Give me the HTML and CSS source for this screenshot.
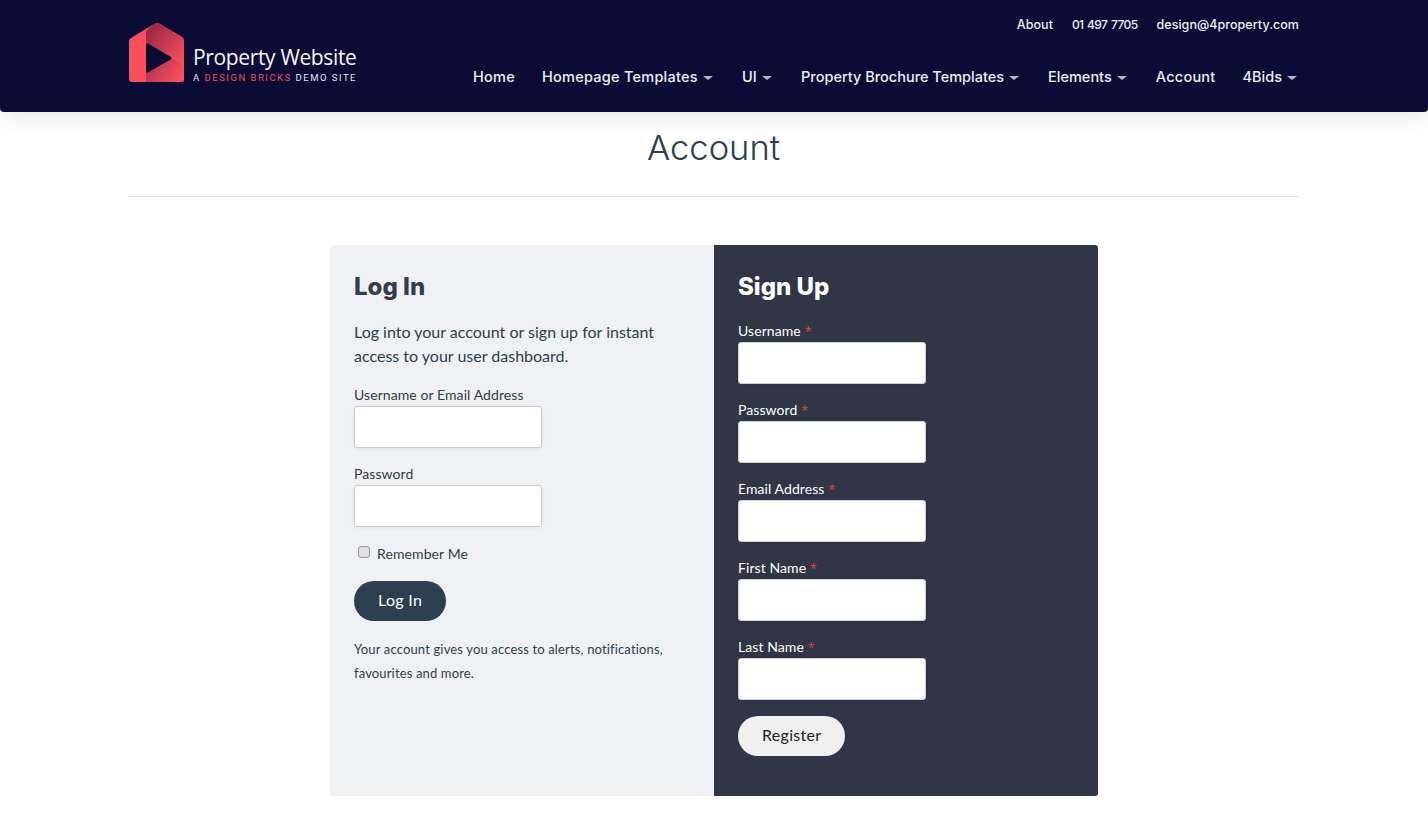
FILE: index.html
```html
<!DOCTYPE html>
<html lang="en">
<head>
    <meta charset="UTF-8">
    <meta name="viewport" content="width=device-width, initial-scale=1.0">
    <title>Account</title>
    <link rel="stylesheet" href="styles.css">
</head>
<body>
    <header class="site-header">
        <div class="header-inner">
            <a class="logo" href="#">
                <svg class="logo-mark" width="56" height="60" viewBox="0 0 56 60">
                    <defs>
                        <linearGradient id="logoFold" x1="0.1" y1="0.1" x2="0.9" y2="0.9">
                            <stop offset="0" stop-color="#9c2745"/>
                            <stop offset="1" stop-color="#fa505b"/>
                        </linearGradient>
                        <linearGradient id="logoBase" x1="0" y1="0.2" x2="1" y2="0.7">
                            <stop offset="0" stop-color="#b0304b"/>
                            <stop offset="1" stop-color="#fb4f5c"/>
                        </linearGradient>
                    </defs>
                    <path d="M2 15 L25 1 Q28 -0.5 31 1 L53 14 Q55 15.5 55 18 L55 56 Q55 59 52 59 L3 59 Q0 59 0 56 L0 18 Q0 16 2 15 Z" fill="#fb4f5c"/>
                    <path d="M17 8 L25 1 Q28 -0.5 31 1 L53 14 Q55 15.5 55 18 L55 47 Q52 38 42 33 L17 20 Z" fill="url(#logoFold)"/>
                    <path d="M17 49 L42.6 35 Q52 38 55 47 L55 56 Q55 59 52 59 L17 59 Z" fill="url(#logoBase)"/>
                    <path d="M17 22 Q17 19.5 19 20.5 L41.5 33.5 Q43.5 35 41.5 36.5 L19 49.5 Q17 50.5 17 48 Z" fill="#0a0c36"/>
                </svg>
                <span class="logo-text">
                    <span class="logo-name">Property Website</span>
                    <span class="logo-tag">A <em>DESIGN BRICKS</em> DEMO SITE</span>
                </span>
            </a>
            <div class="header-right">
                <nav class="top-links">
                    <a href="#">About</a>
                    <a href="#" class="phone">01 497 7705</a>
                    <a href="#">design@4property.com</a>
                </nav>
                <nav class="main-nav">
                    <a href="#">Home</a>
                    <a href="#" class="has-menu">Homepage Templates</a>
                    <a href="#" class="has-menu">UI</a>
                    <a href="#" class="has-menu tight">Property Brochure Templates</a>
                    <a href="#" class="has-menu tight">Elements</a>
                    <a href="#">Account</a>
                    <a href="#" class="has-menu tight">4Bids</a>
                </nav>
            </div>
        </div>
    </header>

    <main class="page">
        <h1 class="page-title">Account</h1>

        <div class="account-box">
            <section class="panel panel-login">
                <h2>Log In</h2>
                <p class="intro">Log into your account or sign up for instant access to your user dashboard.</p>
                <form>
                    <label class="field">Username or Email Address
                        <input type="text">
                    </label>
                    <label class="field">Password
                        <input type="password">
                    </label>
                    <label class="remember"><input type="checkbox"> Remember Me</label>
                    <button type="button" class="btn btn-dark">Log In</button>
                </form>
                <p class="note">Your account gives you access to alerts, notifications, favourites and more.</p>
            </section>

            <section class="panel panel-signup">
                <h2>Sign Up</h2>
                <form>
                    <label class="field">
                        <span>Username <i>*</i></span>
                        <input type="text">
                    </label>
                    <label class="field">
                        <span>Password <i>*</i></span>
                        <input type="password">
                    </label>
                    <label class="field">
                        <span>Email Address <i>*</i></span>
                        <input type="email">
                    </label>
                    <label class="field">
                        <span>First Name <i>*</i></span>
                        <input type="text">
                    </label>
                    <label class="field">
                        <span>Last Name <i>*</i></span>
                        <input type="text">
                    </label>
                    <button type="button" class="btn btn-light">Register</button>
                </form>
            </section>
        </div>
    </main>
</body>
</html>
```

FILE: styles.css
```css
* {
    margin: 0;
    padding: 0;
    box-sizing: border-box;
}

body {
    font-family: "Lato", Arial, sans-serif;
    background-color: #fff;
    color: #2c3e50;
    overflow: hidden;
}

a {
    color: inherit;
    text-decoration: none;
}

.site-header {
    height: 112px;
    background-color: #0a0c36;
    border-radius: 0 0 4px 4px;
    box-shadow: 0 4px 24px rgba(0, 0, 0, 0.1);
}

.header-inner {
    width: 1171px;
    height: 100%;
    margin-left: 129px;
    display: flex;
    justify-content: space-between;
}

.logo {
    display: flex;
    align-items: flex-start;
    padding-top: 23px;
    gap: 8px;
}

.logo-text {
    display: flex;
    flex-direction: column;
    padding-top: 20px;
}

.logo-name {
    font-family: "Open Sans", sans-serif;
    font-size: 21px;
    line-height: 28px;
    letter-spacing: -0.35px;
    color: #f4f4f8;
}

.logo-tag {
    margin-top: 1px;
    font-family: "Roboto", sans-serif;
    font-size: 9.5px;
    line-height: 12px;
    letter-spacing: 1.5px;
    color: #e4e4ec;
}

.logo-tag em {
    font-style: normal;
    color: #ef4f5c;
}

.header-right {
    display: flex;
    flex-direction: column;
    align-items: flex-end;
    padding-right: 1px;
}

.top-links {
    display: flex;
    gap: 19px;
    padding-top: 17px;
    font-family: "Inter", sans-serif;
    font-size: 12.5px;
    font-weight: 500;
    line-height: 16px;
    letter-spacing: 0.05px;
    color: #eeeef4;
}

.top-links .phone {
    font-size: 12px;
    letter-spacing: -0.6px;
    word-spacing: 1px;
}

.main-nav {
    display: flex;
    align-items: center;
    margin-top: 34px;
    font-family: "Inter", sans-serif;
    font-size: 14.5px;
    font-weight: 500;
    line-height: 20px;
    letter-spacing: 0.25px;
    color: #eeeef4;
}

.main-nav a {
    margin-left: 27px;
}

.main-nav .has-menu {
    display: flex;
    align-items: center;
    margin-right: 2px;
}

.main-nav .tight {
    letter-spacing: 0;
}

.main-nav .has-menu::after {
    content: "";
    margin: 2px 0 0 5px;
    border-top: 4px solid #b9b9c6;
    border-left: 5.5px solid transparent;
    border-right: 5.5px solid transparent;
}

.page {
    width: 1171px;
    margin-left: 128px;
}

.page-title {
    height: 85px;
    padding-top: 15px;
    border-bottom: 1px solid #e3e3e3;
    text-align: center;
    font-family: "Inter", sans-serif;
    font-size: 34.5px;
    font-weight: 300;
    line-height: 42px;
    color: #2c3e50;
}

.account-box {
    display: flex;
    width: 768px;
    height: 551px;
    margin: 48px 0 0 202px;
    border-radius: 3px;
    overflow: hidden;
}

.panel {
    width: 384px;
    padding: 24px;
}

.panel-login {
    background-color: #f0f1f5;
}

.panel-signup {
    background-color: #303645;
    color: #fff;
}

.panel h2 {
    font-family: "Inter", sans-serif;
    font-size: 24px;
    font-weight: 800;
    line-height: 36px;
    letter-spacing: 0;
}

.intro {
    margin-top: 15px;
    font-size: 16px;
    line-height: 24px;
}

.panel-login form {
    margin-top: 18px;
}

.panel-signup form {
    margin-top: 17px;
}

.field {
    display: block;
    margin-bottom: 17px;
    font-size: 14px;
    line-height: 18px;
    letter-spacing: 0.08px;
}

.field span {
    display: block;
}

.field i {
    font-family: "Open Sans", sans-serif;
    font-size: 13px;
    font-style: normal;
    color: #e0414e;
}

.field input {
    display: block;
    width: 188px;
    height: 42px;
    margin-top: 2px;
    background-color: #fff;
    border: 1px solid #ccc;
    border-radius: 3px;
    box-shadow: 0 1px 4px rgba(0, 0, 0, 0.05);
}

.panel-signup .field input {
    border-color: #d0d0d0;
}

.panel-signup .field:last-of-type {
    margin-bottom: 16px;
}

.remember {
    display: flex;
    align-items: center;
    gap: 7px;
    height: 20px;
    margin-top: -1px;
    padding-left: 4px;
    font-size: 14px;
    letter-spacing: 0.1px;
}

.remember input {
    appearance: none;
    width: 12px;
    height: 12px;
    margin-top: -2px;
    background-color: #e2e2e6;
    border: 1px solid #999;
    border-radius: 3px;
}

.btn {
    display: block;
    height: 40px;
    padding: 0 24px 3px;
    border: none;
    border-radius: 20px;
    font-family: "Lato", sans-serif;
    font-size: 16px;
    letter-spacing: 0.3px;
    cursor: pointer;
}

.btn-dark {
    margin-top: 18px;
    background-color: #2c3e50;
    color: #fff;
}

.btn-light {
    background-color: #f0f0f0;
    color: #222;
}

.note {
    margin-top: 16px;
    font-size: 13px;
    line-height: 24px;
    letter-spacing: 0.15px;
}
```
